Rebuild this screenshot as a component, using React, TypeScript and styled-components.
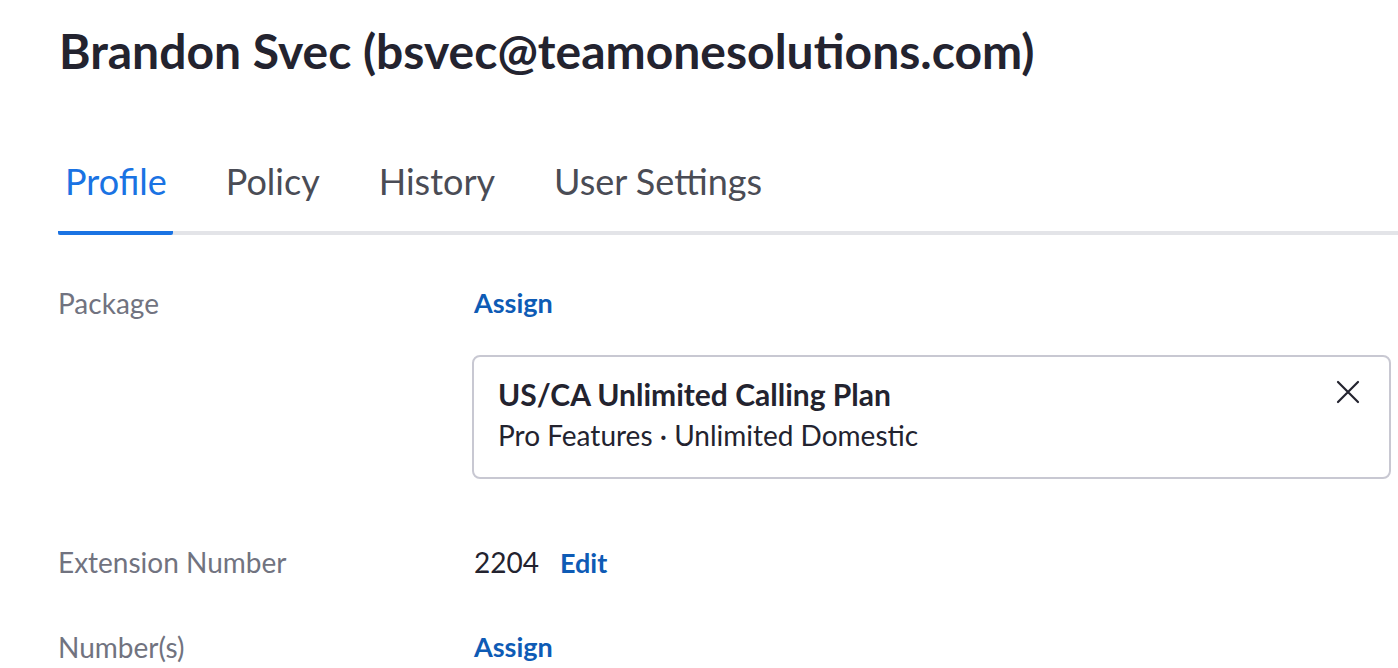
import styled, { createGlobalStyle } from 'styled-components';

const GlobalStyle = createGlobalStyle`
  html, body {
    margin: 0;
    padding: 0;
    background: #ffffff;
    font-family: Lato, "Open Sans", sans-serif;
    color: #23232f;
  }
`;

const Page = styled.div`
  padding: 22px 0 0 58px;
  overflow: hidden;
  height: 668px;
  box-sizing: border-box;
`;

const Title = styled.h1`
  margin: 0;
  font-size: 48px;
  font-weight: 700;
  line-height: 58px;
  color: #23232f;
  padding-left: 1px;
`;

const TabBar = styled.div`
  display: flex;
  gap: 46px;
  margin-top: 80px;
  border-bottom: 4px solid #e3e4e8;
`;

const Tab = styled.div<{ active?: boolean }>`
  padding: 0 6px 29px 7px;
  font-size: 36px;
  line-height: 42px;
  color: ${p => (p.active ? '#1a73e3' : '#4a4c55')};
  margin-bottom: -4px;
  border-bottom: 4px solid ${p => (p.active ? '#1a73e3' : 'transparent')};
  border-radius: 2px;
`;

const Row = styled.div<{ top: number }>`
  display: flex;
  align-items: flex-start;
  margin-top: ${p => p.top}px;
`;

const Label = styled.div`
  width: 416px;
  flex-shrink: 0;
  font-size: 28px;
  line-height: 34px;
  color: #717380;
`;

const Value = styled.div`
  display: flex;
  flex-direction: column;
  align-items: flex-start;
  flex: 1;
`;

const Inline = styled.div`
  display: flex;
  align-items: baseline;
  gap: 21px;
  font-size: 28px;
  line-height: 34px;
`;

const Number = styled.span`
  color: #23232f;
`;

const Link = styled.a`
  color: #0e5bb5;
  font-weight: 700;
  text-decoration: none;
  font-size: 27px;
  line-height: 34px;
  cursor: pointer;
`;

const Card = styled.div`
  position: relative;
  align-self: stretch;
  margin: 35px 7px 0 -2px;
  border: 2px solid #c8c8d2;
  border-radius: 8px;
  padding: 19px 24px 26px;
`;

const CardTitle = styled.div`
  font-size: 30px;
  font-weight: 700;
  line-height: 36px;
  color: #23232f;
`;

const CardSub = styled.div`
  margin-top: 7px;
  font-size: 28px;
  line-height: 32px;
  color: #23232f;
`;

const CloseButton = styled.button`
  position: absolute;
  top: 21px;
  right: 27px;
  width: 28px;
  height: 28px;
  padding: 0;
  border: none;
  background: none;
  display: flex;
  align-items: center;
  justify-content: center;
  cursor: pointer;
`;

const tabs = ['Profile', 'Policy', 'History', 'User Settings'];

export default function App() {
  return (
    <>
      <GlobalStyle />
      <Page>
        <Title>Brandon Svec (bsvec@teamonesolutions.com)</Title>
        <TabBar>
          {tabs.map((t, i) => (
            <Tab key={t} active={i === 0}>{t}</Tab>
          ))}
        </TabBar>

        <Row top={51}>
          <Label>Package</Label>
          <Value>
            <Link>Assign</Link>
            <Card>
              <CardTitle>US/CA Unlimited Calling Plan</CardTitle>
              <CardSub>Pro Features · Unlimited Domestic</CardSub>
              <CloseButton aria-label="Remove">
                <svg width="24" height="24" viewBox="0 0 24 24" fill="none" stroke="#23232f" strokeWidth="2.2" strokeLinecap="round">
                  <path d="M2 2 L22 22 M22 2 L2 22" />
                </svg>
              </CloseButton>
            </Card>
          </Value>
        </Row>

        <Row top={66}>
          <Label>Extension Number</Label>
          <Inline>
            <Number>2204</Number>
            <Link>Edit</Link>
          </Inline>
        </Row>

        <Row top={50}>
          <Label>Number(s)</Label>
          <Value>
            <Link>Assign</Link>
          </Value>
        </Row>
      </Page>
    </>
  );
}
